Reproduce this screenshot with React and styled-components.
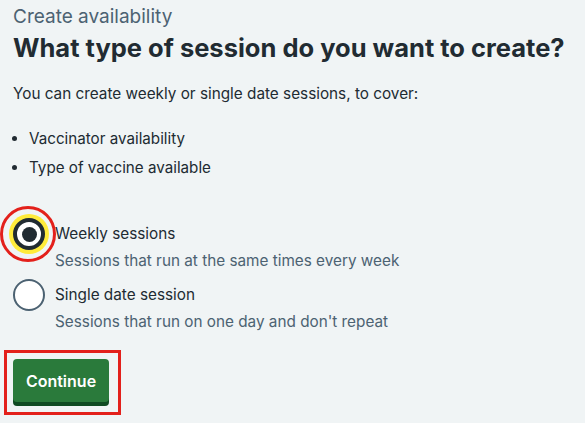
import React, { useState } from 'react';
import styled, { createGlobalStyle } from 'styled-components';

const GlobalStyle = createGlobalStyle`
  html, body {
    margin: 0;
    padding: 0;
    background: #f0f4f5;
  }
  body {
    font-family: Inter, "Noto Sans", Arial, sans-serif;
    color: #212b32;
    -webkit-font-smoothing: antialiased;
  }
`;

const Page = styled.main`
  padding: 4px 13px 0;
  min-height: 423px;
  box-sizing: border-box;
`;

const Caption = styled.span`
  display: block;
  font-size: 19px;
  line-height: 25px;
  color: #4c6272;
`;

const Heading = styled.h1`
  margin: 3px 0 18px;
  font-size: 25.5px;
  line-height: 32px;
  font-weight: 700;
  color: #212b32;
  white-space: nowrap;
`;

const Lead = styled.p`
  margin: 0 0 21px;
  font-size: 15.3px;
  line-height: 24px;
`;

const List = styled.ul`
  margin: 0 0 38px;
  padding: 0 0 0 16px;
`;

const ListItem = styled.li`
  font-size: 15.2px;
  line-height: 24px;
  margin-bottom: 5px;
  &:last-child {
    margin-bottom: 0;
  }
`;

const Radios = styled.div`
  display: flex;
  flex-direction: column;
  gap: 6px;
  margin-bottom: 25px;
`;

const RadioItem = styled.label`
  display: grid;
  grid-template-columns: 32px 1fr;
  column-gap: 10px;
  cursor: pointer;
`;

const RadioMark = styled.span`
  position: relative;
  width: 32px;
  height: 32px;
  box-sizing: border-box;
  border-radius: 50%;
  background: #fff;
  border: ${p => (p.checked ? '4px solid #212b32' : '2px solid #4c6272')};
  box-shadow: ${p => (p.checked ? '0 0 0 4px #ffeb3b' : 'none')};
  display: flex;
  align-items: center;
  justify-content: center;

  &::after {
    content: '';
    display: ${p => (p.checked ? 'block' : 'none')};
    width: 15px;
    height: 15px;
    border-radius: 50%;
    background: #212b32;
  }
`;

const RingMarker = styled.span`
  position: absolute;
  top: -16px;
  left: -17px;
  width: 56px;
  height: 56px;
  box-sizing: border-box;
  border: 3px solid #e3201b;
  border-radius: 50%;
  pointer-events: none;
`;

const RadioLabel = styled.span`
  font-size: 15.3px;
  line-height: 32px;
  color: #212b32;
`;

const RadioHint = styled.span`
  grid-column: 2;
  margin-top: -1px;
  font-size: 15.3px;
  line-height: 24px;
  color: #4c6272;
`;

const ButtonWrap = styled.span`
  position: relative;
  display: inline-block;
`;

const BoxMarker = styled.span`
  position: absolute;
  top: -9px;
  left: -9px;
  right: -12px;
  bottom: -13px;
  border: 3px solid #e3201b;
  pointer-events: none;
`;

const Button = styled.button`
  font-family: inherit;
  font-size: 16px;
  font-weight: 600;
  color: #fff;
  background: #2a7a3b;
  border: 0;
  border-radius: 4px;
  height: 43px;
  width: 96px;
  padding: 0;
  box-shadow: 0 4px 0 #0f4a22;
  cursor: pointer;
`;

const options = [
  {
    id: 'weekly',
    label: 'Weekly sessions',
    hint: 'Sessions that run at the same times every week',
  },
  {
    id: 'single',
    label: 'Single date session',
    hint: "Sessions that run on one day and don't repeat",
  },
];

export default function App() {
  const [value, setValue] = useState('weekly');

  return (
    <>
      <GlobalStyle />
      <Page>
        <Caption>Create availability</Caption>
        <Heading>What type of session do you want to create?</Heading>
        <Lead>You can create weekly or single date sessions, to cover:</Lead>
        <List>
          <ListItem>Vaccinator availability</ListItem>
          <ListItem>Type of vaccine available</ListItem>
        </List>
        <Radios>
          {options.map(o => (
            <RadioItem key={o.id} onClick={() => setValue(o.id)}>
              <RadioMark checked={value === o.id}>
                {value === o.id && <RingMarker />}
              </RadioMark>
              <RadioLabel>{o.label}</RadioLabel>
              <RadioHint>{o.hint}</RadioHint>
            </RadioItem>
          ))}
        </Radios>
        <ButtonWrap>
          <Button type="button">Continue</Button>
          <BoxMarker />
        </ButtonWrap>
      </Page>
    </>
  );
}
